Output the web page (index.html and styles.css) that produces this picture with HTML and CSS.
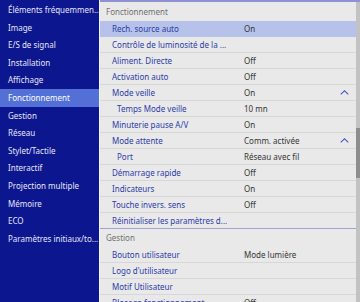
FILE: index.html
```html
<!DOCTYPE html>
<html lang="fr">
<head>
	<meta charset="UTF-8">
	<title>Fonctionnement</title>
	<link rel="stylesheet" href="styles.css">
</head>
<body>
	<div class="menu">
		<div class="item">Éléments fréquemmen...</div>
		<div class="item">Image</div>
		<div class="item">E/S de signal</div>
		<div class="item">Installation</div>
		<div class="item">Affichage</div>
		<div class="item active">Fonctionnement</div>
		<div class="item">Gestion</div>
		<div class="item">Réseau</div>
		<div class="item">Stylet/Tactile</div>
		<div class="item">Interactif</div>
		<div class="item">Projection multiple</div>
		<div class="item">Mémoire</div>
		<div class="item">ECO</div>
		<div class="item">Paramètres initiaux/to...</div>
	</div>
	<div class="panel">
		<div class="list">
			<div class="head">Fonctionnement</div>
			<div class="row sel"><span class="label">Rech. source auto</span><span class="value">On</span></div>
			<div class="row"><span class="label">Contrôle de luminosité de la ...</span><span class="value"></span></div>
			<div class="row"><span class="label">Aliment. Directe</span><span class="value">Off</span></div>
			<div class="row"><span class="label">Activation auto</span><span class="value">Off</span></div>
			<div class="row"><span class="label">Mode veille</span><span class="value">On</span>
				<svg class="chev" width="9" height="5" viewBox="0 0 9 5"><polyline points="0.7,4.3 4.5,0.8 8.3,4.3" fill="none" stroke="#4a5ac4" stroke-width="1.1"/></svg></div>
			<div class="row"><span class="label sub">Temps Mode veille</span><span class="value">10 mn</span></div>
			<div class="row"><span class="label">Minuterie pause A/V</span><span class="value">On</span></div>
			<div class="row"><span class="label">Mode attente</span><span class="value">Comm. activée</span>
				<svg class="chev" width="9" height="5" viewBox="0 0 9 5"><polyline points="0.7,4.3 4.5,0.8 8.3,4.3" fill="none" stroke="#4a5ac4" stroke-width="1.1"/></svg></div>
			<div class="row"><span class="label sub">Port</span><span class="value">Réseau avec fil</span></div>
			<div class="row"><span class="label">Démarrage rapide</span><span class="value">Off</span></div>
			<div class="row"><span class="label">Indicateurs</span><span class="value">On</span></div>
			<div class="row"><span class="label">Touche invers. sens</span><span class="value">Off</span></div>
			<div class="row last"><span class="label">Réinitialiser les paramètres d...</span><span class="value"></span></div>
			<div class="head second">Gestion</div>
			<div class="row"><span class="label">Bouton utilisateur</span><span class="value">Mode lumière</span></div>
			<div class="row"><span class="label">Logo d'utilisateur</span><span class="value"></span></div>
			<div class="row"><span class="label">Motif Utilisateur</span><span class="value"></span></div>
			<div class="row"><span class="label">Blocage fonctionnement</span><span class="value">Off</span></div>
		</div>
		<div class="scroll"><div class="thumb"></div></div>
	</div>
</body>
</html>
```
FILE: styles.css
```css
body{margin: 0;height: 302px;overflow: hidden;display: flex;background-color: #f3f3f3;
	font-family: "Noto Sans", "Open Sans", sans-serif;font-size: 8px;}
.menu{width: 99px;flex-shrink: 0;background-color: #0c168f;padding-top: 1px;}
.menu .item{height: 17.6px;line-height: 17.6px;padding-left: 8px;color: #e4e7f6;white-space: nowrap;overflow: hidden;}
.menu .active{background-color: #5270d6;color: #ffffff;}
.panel{flex: 1;margin-left: 1px;display: flex;border-top: 2px solid #8e92d0;background-color: #e9e9e9;overflow: hidden;}
.list{flex: 1;min-width: 0;}
.head{height: 19px;line-height: 19px;padding-left: 6px;color: #707070;}
.head.second{height: 18px;line-height: 18px;}
.row{height: 16px;box-sizing: border-box;display: flex;align-items: center;border-bottom: 1px solid #d7d7d7;white-space: nowrap;}
.row.sel{background-color: #b6c2e9;border-bottom-color: #b6c2e9;}
.row.last{border-bottom-color: #a0a4d2;}
.label{width: 132px;padding-left: 12px;color: #2c3ba8;overflow: hidden;}
.label.sub{width: 127px;padding-left: 17px;}
.value{flex: 1;color: #353535;}
.chev{margin-right: 7px;}
.scroll{width: 4px;background-color: #c2c2c2;}
.thumb{margin-top: 126px;height: 50px;background-color: #8d8d8d;}
```
